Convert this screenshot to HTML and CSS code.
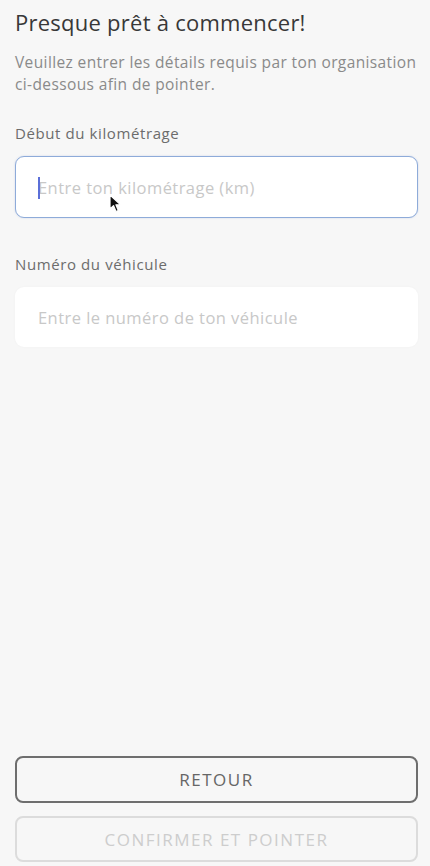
FILE: index.html
```html
<!DOCTYPE html>
<html lang="fr">
<head>
    <meta charset="UTF-8">
    <meta name="viewport" content="width=device-width, initial-scale=1.0">
    <title>Pointer</title>
    <link rel="stylesheet" href="styles.css">
</head>
<body>
    <main class="screen">
        <!-- Header -->
        <h1 class="title">Presque prêt à commencer!</h1>
        <p class="subtitle">Veuillez entrer les détails requis par ton organisation <span class="nowrap">ci-dessous</span> afin de pointer.</p>

        <!-- Mileage field -->
        <label class="field-label" for="km">Début du kilométrage</label>
        <div class="field">
            <input id="km" class="field-input is-focused" type="text" placeholder="Entre ton kilométrage (km)">
            <span class="caret"></span>
            <svg class="pointer" width="14" height="20" viewBox="0 0 14 20">
                <path d="M1 1 L1 15 L4.5 11.6 L7 17.5 L9.3 16.5 L6.9 10.8 L11.6 10.8 Z" fill="#111" stroke="#fff" stroke-width="1.2" stroke-linejoin="round"/>
            </svg>
        </div>

        <!-- Vehicle field -->
        <label class="field-label field-label--spaced" for="vehicle">Numéro du véhicule</label>
        <div class="field">
            <input id="vehicle" class="field-input field-input--plain" type="text" placeholder="Entre le numéro de ton véhicule">
        </div>

        <!-- Actions -->
        <div class="actions">
            <button class="btn btn-back" type="button">RETOUR</button>
            <button class="btn btn-confirm" type="button" disabled>CONFIRMER ET POINTER</button>
        </div>
    </main>
</body>
</html>
```

FILE: styles.css
```css
/* Page */
html, body {
    margin: 0;
    padding: 0;
    background-color: #f7f7f7;
}

body {
    font-family: 'Open Sans', 'Noto Sans', sans-serif;
}

.screen {
    height: 866px;
    box-sizing: border-box;
    padding: 8px 12px 4px 15px;
    display: flex;
    flex-direction: column;
}

/* Header */
.title {
    margin: 0;
    font-size: 22px;
    line-height: 28px;
    font-weight: 400;
    letter-spacing: 0.25px;
    color: #383838;
}

.subtitle {
    margin: 15px 0 0;
    font-size: 15.5px;
    line-height: 22px;
    letter-spacing: 0.38px;
    color: #8a8a8a;
}

.nowrap {
    white-space: nowrap;
}

/* Fields */
.field-label {
    margin-top: 28px;
    font-size: 15px;
    line-height: 20px;
    letter-spacing: 0.6px;
    color: #6c6c6c;
}

.field-label--spaced {
    margin-top: 36px;
}

.field {
    position: relative;
    margin-top: 13px;
}

.field-input {
    display: block;
    width: 100%;
    height: 62px;
    box-sizing: border-box;
    padding: 0 22px;
    border: 1px solid transparent;
    border-radius: 9px;
    background-color: #fff;
    font-family: inherit;
    font-size: 16.5px;
    letter-spacing: 0.45px;
    color: #333;
    outline: none;
}

.field-input::placeholder {
    color: #c8c8c8;
}

.field-input.is-focused {
    border-color: #8eabd9;
    box-shadow: 0 0 2px rgba(120, 150, 210, 0.35);
}

.field-input--plain {
    height: 60px;
    box-shadow: 0 0 3px rgba(0, 0, 0, 0.03);
}

/* Text caret drawn over the focused field */
.caret {
    position: absolute;
    left: 23px;
    top: 21px;
    width: 2px;
    height: 22px;
    background-color: #5b6fd8;
}

/* Mouse pointer over the first field */
.pointer {
    position: absolute;
    left: 94px;
    top: 38px;
}

/* Buttons */
.actions {
    margin-top: auto;
    display: flex;
    flex-direction: column;
    gap: 13px;
}

.btn {
    height: 47px;
    border-radius: 8px;
    background-color: transparent;
    font-family: inherit;
    font-size: 17px;
    letter-spacing: 1.5px;
}

.btn-back {
    border: 2px solid #6e6e6e;
    color: #666;
}

.btn-confirm {
    height: 46px;
    border: 2px solid #dcdcdc;
    color: #cdcdcd;
}
```
